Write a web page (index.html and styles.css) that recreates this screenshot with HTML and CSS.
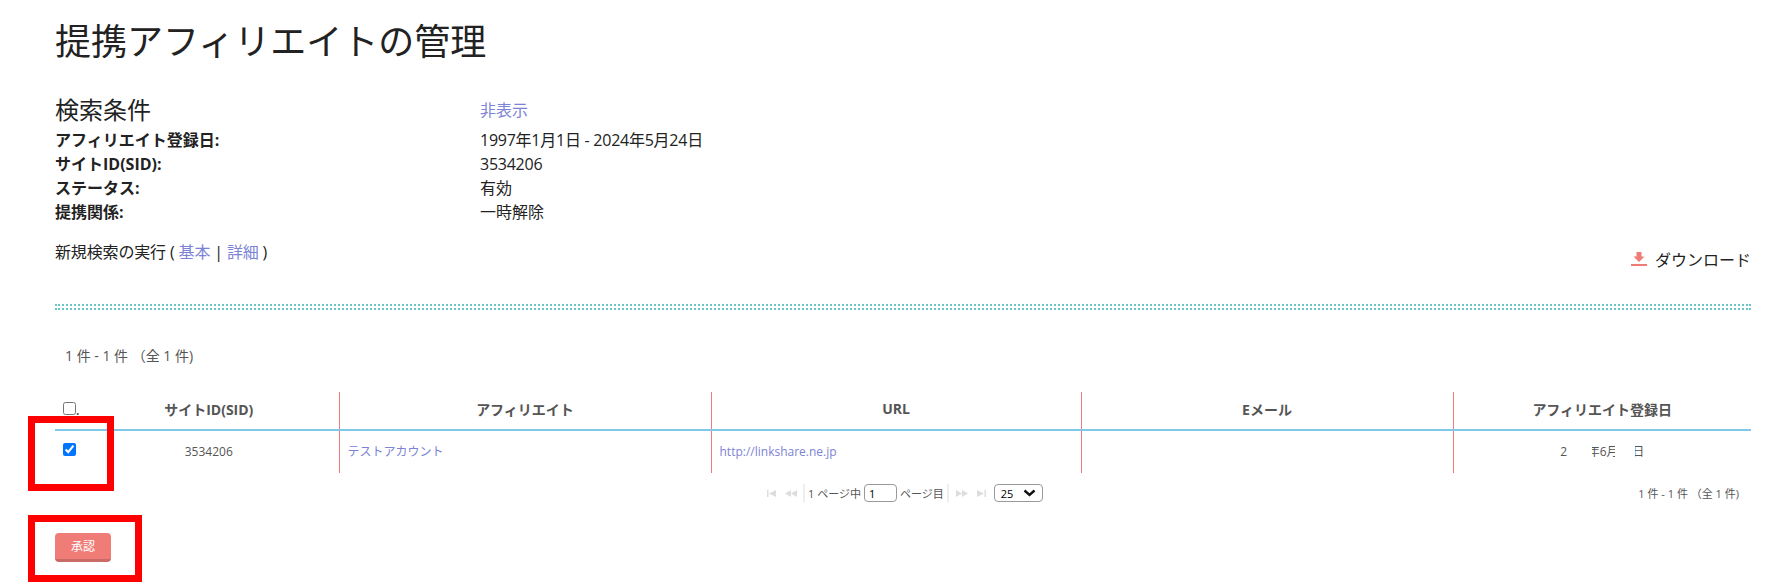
FILE: index.html
```html
<!DOCTYPE html>
<html lang="ja">
<head>
<meta charset="utf-8">
<title>提携アフィリエイトの管理</title>
<link rel="stylesheet" href="styles.css">
</head>
<body>
<main class="page">
  <h1 class="title">提携アフィリエイトの管理</h1>
  <section class="criteria">
    <h2 class="criteria-title">検索条件</h2><a class="link toggle" href="#">非表示</a>
    <div class="label">アフィリエイト登録日:</div><div class="tight">1997年1月1日 - 2024年5月24日</div>
    <div class="label">サイトID(SID):</div><div class="tight">3534206</div>
    <div class="label">ステータス:</div><div>有効</div>
    <div class="label">提携関係:</div><div>一時解除</div>
  </section>
  <div class="actions">
    <div class="new-search">新規検索の実行 ( <a class="link" href="#">基本</a> | <a class="link" href="#">詳細</a> )</div>
    <a class="download" href="#">
      <svg class="download-icon" width="16" height="14" viewBox="0 0 16 14"><path d="M5.500 0h5v4.500h3L8 10 2.500 4.500h3z" fill="#f07c78"/><rect y="12" width="16" height="2" fill="#f07c78"/></svg>
      ダウンロード
    </a>
  </div>
  <div class="divider"></div>
  <p class="count">1 件 - 1 件 （全 1 件)</p>
  <table class="grid">
    <colgroup>
      <col class="c0"><col class="c1"><col class="c2"><col class="c3"><col class="c4"><col class="c5">
    </colgroup>
    <thead>
      <tr>
        <th class="check"><input type="checkbox" class="box">.</th>
        <th>サイトID(SID)</th>
        <th class="rule">アフィリエイト</th>
        <th class="rule">URL</th>
        <th class="rule">Eメール</th>
        <th class="rule">アフィリエイト登録日</th>
      </tr>
    </thead>
    <tbody>
      <tr>
        <td class="check"><input type="checkbox" class="box" checked></td>
        <td class="center">3534206</td>
        <td class="rule"><a class="link" href="#">テストアカウント</a></td>
        <td class="rule"><a class="link" href="#">http://linkshare.ne.jp</a></td>
        <td class="rule"></td>
        <td class="rule center"><span class="date">2020年6月11日<i class="mask mask-a"></i><i class="mask mask-b"></i></span></td>
      </tr>
    </tbody>
  </table>
  <div class="pager-row">
    <div class="pager">
      <svg class="nav" width="10" height="7" viewBox="0 0 10 7"><path d="M0 0h1.500v7H0zM9 0v7L2 3.500z" fill="#ddd"/></svg>
      <svg class="nav" width="12" height="7" viewBox="0 0 12 7"><path d="M6 0v7L0 3.500zM12 0v7L6 3.500z" fill="#ddd"/></svg>
      <span class="sep"></span>
      <span>1 ページ中</span>
      <input class="page-input" type="text" value="1">
      <span>ページ目</span>
      <span class="sep"></span>
      <svg class="nav nav-next" width="12" height="7" viewBox="0 0 12 7"><path d="M0 0v7l6-3.500zM6 0v7l6-3.500z" fill="#ddd"/></svg>
      <svg class="nav" width="10" height="7" viewBox="0 0 10 7"><path d="M1 0v7l7-3.500zM8.500 0H10v7H8.500z" fill="#ddd"/></svg>
      <span class="size-select">25<svg width="13" height="8" viewBox="0 0 13 8"><path d="M1.500 1.500l5 4.500 5-4.500" fill="none" stroke="#111" stroke-width="2.400"/></svg></span>
    </div>
    <div class="pager-count">1 件 - 1 件 （全 1 件)</div>
  </div>
  <button class="approve" type="button">承認</button>
</main>
<div class="callout callout-check"></div>
<div class="callout callout-button"></div>
</body>
</html>
```
FILE: styles.css
```css
* { box-sizing: border-box; }
html, body { margin: 0; height: 588px; overflow: hidden; background: #fff; }
body {
  font-family: "Open Sans", "Noto Sans CJK JP", sans-serif;
  font-size: 14px;
  color: #222;
  position: relative;
}
.page { padding: 17px 36px 0 55px; }
.title { margin: 0; font-size: 36px; font-weight: 400; line-height: 50px; color: #222; }
.criteria {
  display: grid;
  grid-template-columns: 425px 1fr;
  margin-top: 25px;
  line-height: 24px;
  font-size: 16px;
}
.criteria-title { margin: 0; font-size: 24px; font-weight: 400; line-height: 36px; }
.toggle { align-self: center; }
.label { font-weight: 700; }
.tight { letter-spacing: -0.25px; }
.link { color: #7c83d6; text-decoration: none; }
.actions {
  display: flex;
  justify-content: space-between;
  margin-top: 16px;
  height: 64px;
  font-size: 16px;
}
.new-search { letter-spacing: -0.15px; margin-top: -1px; }
.download { display: flex; align-items: center; gap: 8px; height: 24px; margin-top: 7px; font-size: 16px; color: #222; text-decoration: none; }
.divider { height: 6px; border-top: 2px dotted #6cc5c5; border-bottom: 2px dotted #6cc5c5; }
.count { margin: 36px 0 0 10px; font-size: 14px; line-height: 20px; color: #555; }
.grid { width: 1696px; table-layout: fixed; border-collapse: collapse; margin-top: 26px; font-size: 12px; color: #555; }
.c0 { width: 24px; } .c1 { width: 260px; } .c2 { width: 372px; }
.c3 { width: 370px; } .c4 { width: 372px; } .c5 { width: 298px; }
th { height: 38px; font-size: 14px; font-weight: 700; text-align: center; border-bottom: 2px solid #7fc8e8; padding: 0 8px 4px; }
td { height: 43px; padding: 0 8px 2px; vertical-align: middle; }
.rule { border-left: 1px solid #f07c78; }
.center { text-align: center; }
.check { padding: 0 0 0 8px; text-align: left; white-space: nowrap; vertical-align: top; }
th.check { padding-top: 10px; font-size: 12px; }
td.check { padding-top: 12px; }
.box { margin: 0; width: 13px; height: 13px; }
.date { position: relative; display: inline-block; }
.mask { position: absolute; top: 0; bottom: 0; background: #fff; }
.mask-a { left: 7px; width: 25px; }
.mask-b { left: 55px; width: 20px; }
.pager-row { display: flex; align-items: center; height: 30px; margin-top: 5px; font-size: 11px; color: #555; }
.pager { display: flex; align-items: center; gap: 3px; margin-left: 710px; }
.nav { margin: 0 3px 0 2px; }
.nav-next { margin-left: 4px; }
.sep { width: 2px; height: 18px; background: #eee; }
.page-input { width: 33px; height: 18px; border: 1px solid #999; border-radius: 4px; font: 11px "Open Sans", sans-serif; padding: 0 4px; color: #000; }
.size-select { display: flex; align-items: center; justify-content: space-between; width: 49px; height: 18px; margin-left: 2px; border: 1px solid #999; border-radius: 4px; padding: 0 6px; color: #000; }
.pager-count { margin-left: auto; margin-right: 12px; }
.approve { display: block; margin-top: 25px; width: 56px; height: 29px; border: 0; border-bottom: 3px solid #c96a66; border-radius: 4px; background: #f07c78; color: #fff; font: 12px "Open Sans", "Noto Sans CJK JP", sans-serif; padding: 0; }
.callout { position: absolute; border: 7px solid #f00; }
.callout-check { left: 28px; top: 416px; width: 86px; height: 75px; }
.callout-button { left: 28px; top: 515px; width: 114px; height: 67px; }
```
